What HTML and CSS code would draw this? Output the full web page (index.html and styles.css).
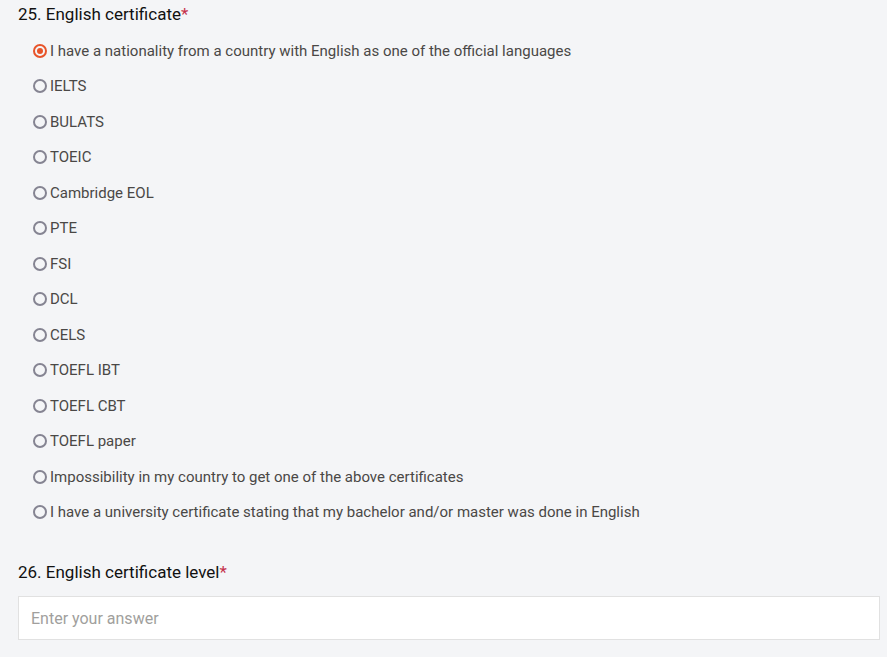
FILE: index.html
```html
<!DOCTYPE html>
<html>
<head>
<meta charset="utf-8">
<link rel="stylesheet" href="styles.css">
</head>
<body>
<div class="form">
  <div class="question">
    <div class="q-title">25. English certificate<span class="req">*</span></div>
    <div class="options">
      <label class="opt"><span class="radio checked"></span><span>I have a nationality from a country with English as one of the official languages</span></label>
      <label class="opt"><span class="radio"></span><span>IELTS</span></label>
      <label class="opt"><span class="radio"></span><span>BULATS</span></label>
      <label class="opt"><span class="radio"></span><span>TOEIC</span></label>
      <label class="opt"><span class="radio"></span><span>Cambridge EOL</span></label>
      <label class="opt"><span class="radio"></span><span>PTE</span></label>
      <label class="opt"><span class="radio"></span><span>FSI</span></label>
      <label class="opt"><span class="radio"></span><span>DCL</span></label>
      <label class="opt"><span class="radio"></span><span>CELS</span></label>
      <label class="opt"><span class="radio"></span><span>TOEFL IBT</span></label>
      <label class="opt"><span class="radio"></span><span>TOEFL CBT</span></label>
      <label class="opt"><span class="radio"></span><span>TOEFL paper</span></label>
      <label class="opt"><span class="radio"></span><span>Impossibility in my country to get one of the above certificates</span></label>
      <label class="opt"><span class="radio"></span><span>I have a university certificate stating that my bachelor and/or master was done in English</span></label>
    </div>
  </div>
  <div class="question q2">
    <div class="q-title">26. English certificate level<span class="req">*</span></div>
    <div class="input">Enter your answer</div>
  </div>
</div>
</body>
</html>
```
FILE: styles.css
```css
html, body {
  margin: 0;
  padding: 0;
  background: #f4f5f7;
  font-family: Roboto, "Liberation Sans", sans-serif;
}
.form {
  padding: 3px 7px 0 18px;
}
.q-title {
  font-size: 17px;
  color: #111;
  line-height: 22px;
}
.req {
  color: #c4314b;
}
.options {
  display: flex;
  flex-direction: column;
  padding: 8px 0 0 15px;
}
.opt {
  display: flex;
  align-items: center;
  gap: 3px;
  height: 35.5px;
  font-size: 15px;
  color: #4a4846;
}
.radio {
  box-sizing: border-box;
  width: 14px;
  height: 14px;
  border-radius: 50%;
  border: 2px solid #858492;
  flex: none;
  display: flex;
  align-items: center;
  justify-content: center;
}
.radio.checked {
  border-color: #e8542a;
}
.radio.checked::after {
  content: "";
  width: 6px;
  height: 6px;
  border-radius: 50%;
  background: #e8542a;
}
.q2 {
  margin-top: 31px;
}
.q2 .input {
  margin-top: 13px;
  height: 44px;
  box-sizing: border-box;
  background: #fff;
  border: 1px solid #e1e1e1;
  padding: 0 12px;
  display: flex;
  align-items: center;
  font-size: 16px;
  color: #a19f9d;
}
```
